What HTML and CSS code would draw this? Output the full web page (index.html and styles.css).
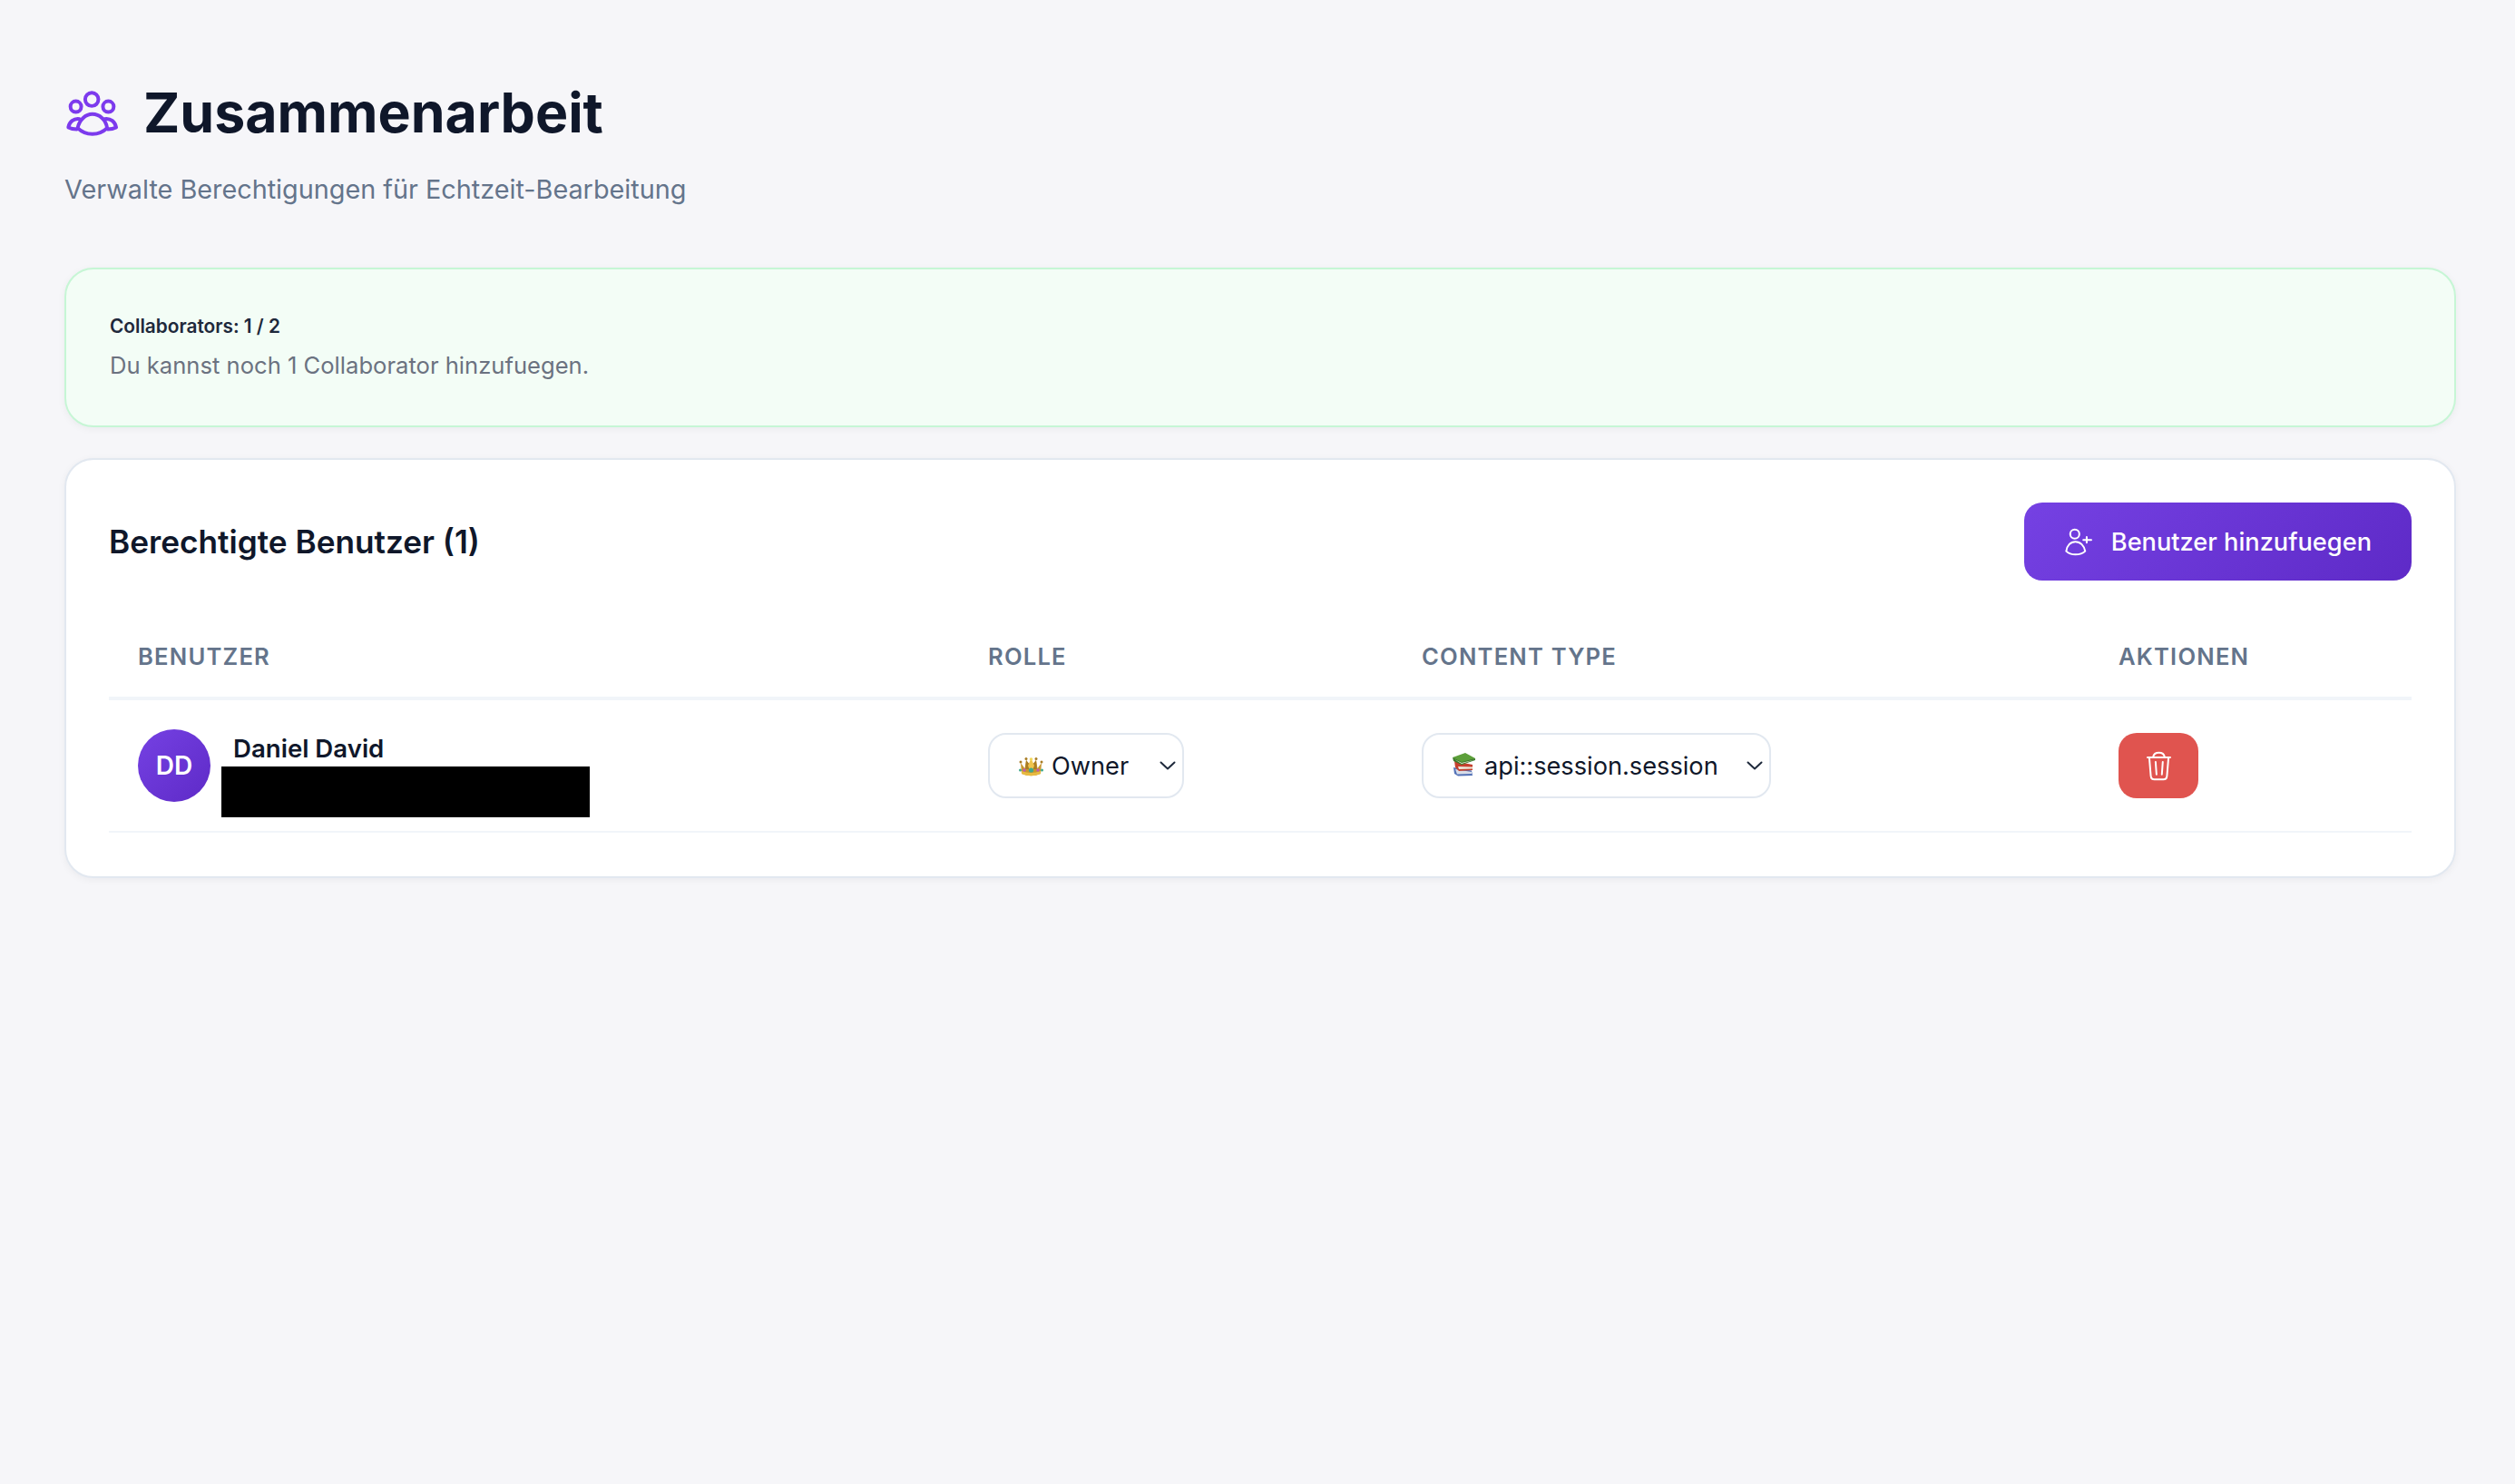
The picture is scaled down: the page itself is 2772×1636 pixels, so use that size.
FILE: index.html
```html
<!DOCTYPE html>
<html lang="de">
<head>
<meta charset="utf-8">
<title>Zusammenarbeit</title>
<link rel="stylesheet" href="styles.css">
</head>
<body>
<main class="page">
  <header class="page-head">
    <h1 class="title">
      <svg class="title-icon" viewBox="40 52 172 152" fill="none" stroke="#7c3aed" stroke-width="12" stroke-linejoin="round" stroke-linecap="round">
        <circle cx="125" cy="83" r="22"/>
        <circle cx="72" cy="107" r="18"/>
        <circle cx="180" cy="107" r="18"/>
        <path d="M78 178C84 150 105 132 127 132C150 132 172 150 176 178C160 194 140 198 127 198C110 198 92 192 78 178Z"/>
        <path d="M84 148C65 145 50 158 47 176C55 180 65 182 75 182"/>
        <path d="M168 148C188 145 203 158 206 176C198 180 188 182 178 182"/>
      </svg>
      <span>Zusammenarbeit</span>
    </h1>
    <p class="subtitle">Verwalte Berechtigungen für Echtzeit-Bearbeitung</p>
  </header>

  <section class="card card-green">
    <p class="limit-title">Collaborators: 1 / 2</p>
    <p class="limit-text">Du kannst noch 1 Collaborator hinzufuegen.</p>
  </section>

  <section class="card card-users">
    <div class="users-head">
      <h2 class="users-title">Berechtigte Benutzer (1)</h2>
      <button class="btn-add" type="button">
        <svg class="btn-icon" viewBox="225 153 95 95" fill="none" stroke="#fff" stroke-width="6" stroke-linecap="round" stroke-linejoin="round">
          <circle cx="260" cy="176" r="15"/>
          <path d="M232 232C234 214 246 201 262 201C278 201 291 214 294 232C286 240 272 243 262 243C250 243 240 240 232 232Z"/>
          <path d="M299 186V204M288 195H314"/>
        </svg>
        <span>Benutzer hinzufuegen</span>
      </button>
    </div>
    <table class="users-table">
      <colgroup>
        <col class="col-user"><col class="col-role"><col class="col-type"><col class="col-actions">
      </colgroup>
      <thead>
        <tr><th>Benutzer</th><th>Rolle</th><th>Content Type</th><th>Aktionen</th></tr>
      </thead>
      <tbody>
        <tr>
          <td>
            <div class="user">
              <div class="avatar">DD</div>
              <div class="user-info">
                <div class="user-name">Daniel David</div>
                <div class="redacted"></div>
              </div>
            </div>
          </td>
          <td>
            <div class="select select-role">
              <svg class="emoji emoji-crown" viewBox="0 0 27 23">
                <path d="M2 8L6.5 14L8 5L13.5 12L19 5L20.5 14L25 8L24 20Q13.5 24.5 3 20Z" fill="#c8962e"/>
                <path d="M8 5L13.5 12L19 5L19.8 15H7.2Z" fill="#a97c24"/>
                <path d="M13.5 3L17 11L15.5 15H11.500L10 11Z" fill="#eec44d"/>
                <path d="M3 17Q13.5 21 24 17L24 20Q13.500 24.500 3 20Z" fill="#e8bb42"/>
                <circle cx="2" cy="7" r="1.500" fill="#a97c24"/><circle cx="8" cy="3.500" r="1.500" fill="#a97c24"/><circle cx="19" cy="3.500" r="1.500" fill="#a97c24"/><circle cx="25" cy="7" r="1.500" fill="#a97c24"/><circle cx="13.500" cy="4" r="1.800" fill="#f3d95c"/>
                <circle cx="13.500" cy="16" r="2.600" fill="#3fa98c"/><circle cx="6" cy="16" r="1.700" fill="#c05bb0"/><circle cx="21" cy="16" r="1.700" fill="#c05bb0"/><circle cx="1.500" cy="16" r="1.500" fill="#3fa98c"/><circle cx="25.500" cy="16" r="1.500" fill="#3fa98c"/>
              </svg>
              <span>Owner</span>
              <svg class="chev" viewBox="0 0 18 10" fill="none" stroke="#1e293b" stroke-width="2" stroke-linecap="round" stroke-linejoin="round"><path d="M1.500 1.500L9 8.500L16.500 1.500"/></svg>
            </div>
          </td>
          <td>
            <div class="select select-type">
              <svg class="emoji emoji-books" viewBox="0 0 25 26">
                <path d="M1 16L21 19.500L22 25L6 25.500L2 23Z" fill="#5573b8"/>
                <path d="M3 18L21 21V23L5 23.500Z" fill="#d8dde8"/>
                <path d="M2 9L22 13L22 19L7 20L3 16Z" fill="#c5402e"/>
                <path d="M6 15L22 15.500V17.500L7 18Z" fill="#eee6d8"/>
                <path d="M0 5L14 0L25 6L10 13Z" fill="#5c9f3a"/>
                <path d="M0 5L10 10L25 6V8L10 13L1 9Z" fill="#3b7a2a"/>
                <path d="M2 7L10 11L24 7.500L10 12Z" fill="#eef1e6"/>
              </svg>
              <span>api::session.session</span>
              <svg class="chev" viewBox="0 0 18 10" fill="none" stroke="#1e293b" stroke-width="2" stroke-linecap="round" stroke-linejoin="round"><path d="M1.500 1.500L9 8.500L16.500 1.500"/></svg>
            </div>
          </td>
          <td>
            <button class="btn-delete" type="button" aria-label="Entfernen">
              <svg class="trash" viewBox="190 110 94 104" fill="none" stroke="#fff" stroke-width="6" stroke-linecap="round" stroke-linejoin="round">
                <path d="M199 133H275"/>
                <path d="M218 131C220 120 228 117 237 117C246 117 254 120 256 131"/>
                <path d="M205 135L210 195Q211 207 222 207H252Q263 207 264 195L269 135"/>
                <path d="M226 148L229 190M250 148L247 190"/>
              </svg>
            </button>
          </td>
        </tr>
      </tbody>
    </table>
  </section>
</main>
</body>
</html>
```
FILE: styles.css
```css
* { box-sizing: border-box; }
html, body { margin: 0; padding: 0; }
body {
  min-height: 100vh;
  background: #f6f6f9;
  color: #0f172a;
  font-family: Inter, "Liberation Sans", sans-serif;
}
.page { padding: 90px 65px 0 71px; }
.page-head { margin-bottom: 68px; }
.title {
  display: flex;
  align-items: center;
  gap: 28px;
  margin: 0;
  height: 68px;
  font-size: 60.8px;
  line-height: 68px;
  font-weight: 700;
}
.title-icon { width: 57px; height: 51px; flex: none; margin-left: 2px; }
.subtitle {
  margin: 33px 0 0;
  font-size: 28.8px;
  line-height: 36px;
  color: #64748b;
}
.card {
  border: 2px solid #e2e8f0;
  border-radius: 32px;
  box-shadow: 0 2px 8px rgba(15, 23, 42, 0.05);
}
.card-green {
  height: 176px;
  padding: 51px 48px 0;
  background: #f3fdf6;
  border-color: #c6f6d5;
  margin-bottom: 34px;
}
.limit-title {
  margin: 0 0 15px;
  font-size: 20.8px;
  line-height: 24px;
  font-weight: 600;
  color: #1e293b;
}
.limit-text {
  margin: 0;
  font-size: 25.6px;
  line-height: 32px;
  color: #6b7280;
}
.card-users {
  height: 463px;
  padding: 47px 47px 0;
  background: #fff;
}
.users-head {
  display: flex;
  align-items: center;
  justify-content: space-between;
  margin-bottom: 36px;
}
.users-title {
  margin: 0;
  font-size: 35.2px;
  line-height: 44px;
  font-weight: 600;
}
.btn-add {
  display: flex;
  align-items: center;
  gap: 20px;
  height: 86px;
  padding: 0 44px;
  border: 0;
  border-radius: 20px;
  background: linear-gradient(135deg, #7541e3, #5e2ac7);
  color: #fff;
  font-family: inherit;
  font-size: 27.2px;
  font-weight: 500;
}
.btn-icon { width: 32px; height: 32px; flex: none; }
.users-table {
  width: 100%;
  border-collapse: collapse;
  table-layout: fixed;
}
.col-user { width: 937px; }
.col-role { width: 478px; }
.col-type { width: 768px; }
.users-table th {
  padding: 3px 32px 0;
  height: 94px;
  text-align: left;
  font-size: 25.6px;
  font-weight: 600;
  letter-spacing: 1.2px;
  text-transform: uppercase;
  color: #64748b;
  border-bottom: 4px solid #f1f5f9;
}
.users-table td {
  padding: 0 32px;
  height: 147px;
  border-bottom: 2px solid #f1f5f9;
  vertical-align: middle;
}
.user { display: flex; align-items: center; gap: 25px; }
.avatar {
  display: flex;
  align-items: center;
  justify-content: center;
  width: 80px;
  height: 80px;
  flex: none;
  border-radius: 50%;
  background: linear-gradient(135deg, #7541e3, #5e2ac7);
  color: #fff;
  font-size: 28px;
  font-weight: 600;
}
.user-info { position: relative; height: 80px; padding-top: 4px; }
.user-name { font-size: 27.6px; line-height: 34px; font-weight: 600; }
.redacted {
  position: absolute;
  left: -13px;
  top: 41px;
  width: 406px;
  height: 56px;
  background: #000;
}
.select {
  display: flex;
  align-items: center;
  height: 72px;
  background: #fff;
  border: 2px solid #e2e8f0;
  border-radius: 20px;
  padding: 0 7px 0 32px;
  font-size: 27.2px;
  color: #0f172a;
}
.select-role { width: 216px; }
.select-type { width: 385px; }
.select .chev { margin-left: auto; }
.emoji { flex: none; margin-right: 9px; }
.emoji-crown { width: 27px; height: 23px; }
.emoji-books { width: 25px; height: 26px; margin-top: -3px; margin-right: 10px; }
.chev { width: 18px; height: 10px; flex: none; }
.btn-delete {
  display: flex;
  align-items: center;
  justify-content: center;
  width: 88px;
  height: 72px;
  padding: 0;
  border: 0;
  border-radius: 20px;
  background: #e0544f;
}
.trash { width: 31px; height: 35px; }
```
